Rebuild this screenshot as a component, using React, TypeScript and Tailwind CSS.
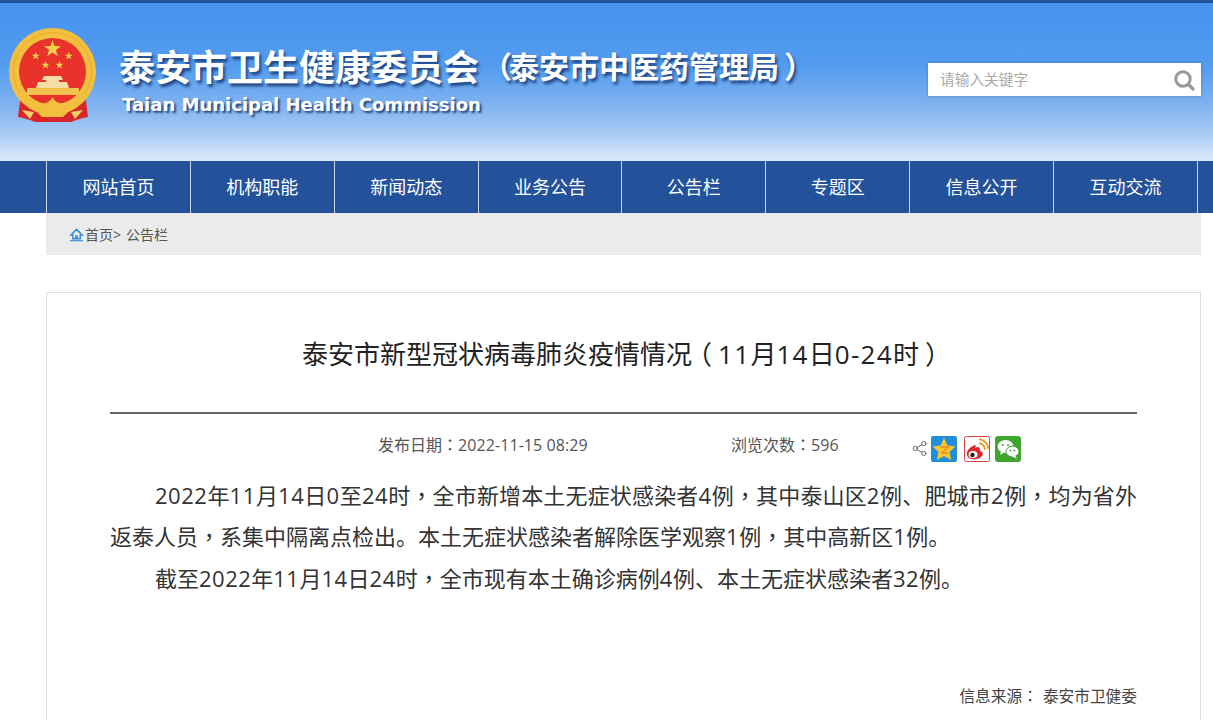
import { Share2 } from 'lucide-react';

const navItems = ['网站首页', '机构职能', '新闻动态', '业务公告', '公告栏', '专题区', '信息公开', '互动交流'];

// digits run a bit wider than Open Sans, and the comma / colon sit in the middle of their box
const Rich = ({ text, digits = 'tracking-[0.022em]' }: { text: string; digits?: string }) => (
  <>
    {text
      .split(/([0-9:-]+|[，：])/)
      .filter(Boolean)
      .map((part, i) => {
        if (part === '，' || part === '：') {
          return (
            <span key={i} className="font-['Noto_Sans_CJK_TC',sans-serif]">
              {part}
            </span>
          );
        }
        if (/^[0-9:-]+$/.test(part)) {
          return (
            <span key={i} className={digits}>
              {part}
            </span>
          );
        }
        return <span key={i}>{part}</span>;
      })}
  </>
);

const starPoints = (cx: number, cy: number, r: number) => {
  const pts: string[] = [];
  for (let i = 0; i < 10; i++) {
    const rad = i % 2 === 0 ? r : r * 0.4;
    const a = (Math.PI / 5) * i - Math.PI / 2;
    pts.push(`${(cx + rad * Math.cos(a)).toFixed(2)},${(cy + rad * Math.sin(a)).toFixed(2)}`);
  }
  return pts.join(' ');
};

const Emblem = () => (
  <svg width="90" height="97" viewBox="0 0 90 97">
    <path d="M14 62 C12 72 11 82 10 90 C17 91 22 93 27 95 L63 95 C68 93 73 91 80 90 C79 82 78 72 76 62 Z" fill="#d8262a" />
    <circle cx="44.5" cy="44.5" r="43.5" fill="#f3bf3f" />
    <circle cx="44.5" cy="44.5" r="39" fill="none" stroke="#e9a92c" strokeWidth="1" />
    <circle cx="44.5" cy="44.5" r="33.5" fill="#e9322a" />
    <polygon points={starPoints(44.5, 22, 9)} fill="#f8ce4b" />
    <polygon points={starPoints(27.7, 29, 4.2)} fill="#f8ce4b" />
    <polygon points={starPoints(60.7, 29, 4.2)} fill="#f8ce4b" />
    <polygon points={starPoints(37.5, 38, 4.2)} fill="#f8ce4b" />
    <polygon points={starPoints(51.5, 38, 4.2)} fill="#f8ce4b" />
    <path d="M36 49 H53 L55 53 H51 V55 H59 L61 61 H28 L30 55 H38 V53 H34 Z" fill="#f6dca6" />
    <rect x="19" y="61" width="52" height="7" fill="#f2c14e" />
    <path d="M13 63 C21 73 32 77 38 76 C41 75 43 73 44.5 70 C46 73 48 75 51 76 C57 77 68 73 76 63 L77 69 C69 80 57 83 50 80 L39 80 C32 83 20 80 12 69 Z" fill="#f3bf3f" />
    <path d="M33 82 C37 80 41 78 44.5 74 C48 78 52 80 56 82 L61 84 L55 90 H34 L28 84 Z" fill="#f3bf3f" />
    <path d="M14 83 L26 85 L22 92 Z M75 83 L63 85 L67 92 Z" fill="#f6d06a" />
  </svg>
);

const QzoneIcon = () => (
  <svg width="26" height="26" viewBox="0 0 26 26">
    <rect width="26" height="26" rx="2" fill="#1f8fdc" />
    <polygon points="13,2 16.5,9.5 24.5,10.5 18.5,16 20.2,24 13,20 5.8,24 7.5,16 1.5,10.5 9.5,9.5" fill="#f8c630" />
    <path d="M9 11 H17 L11 17 H17" fill="none" stroke="#e8941a" strokeWidth="1.6" />
  </svg>
);

const WeiboIcon = () => (
  <svg width="26" height="26" viewBox="0 0 26 26">
    <rect x="0.5" y="0.5" width="25" height="25" rx="2" fill="#fff" stroke="#d6433f" />
    <path d="M11 9 C5 11 2 16 3 19 C4 23 9 24 13 23 C18 22 20 18 18 16 C17 15 16 15 16 14 C16 11 14 10 11 12 C12 10 12 8 11 9 Z" fill="#e0272c" />
    <ellipse cx="9" cy="18.5" rx="4.5" ry="3.6" fill="#fff" />
    <circle cx="8.5" cy="19" r="2.2" fill="#222" />
    <path d="M15 7 A7 7 0 0 1 21 14" fill="none" stroke="#f39a2b" strokeWidth="2" />
    <path d="M15 3 A11 11 0 0 1 24.5 13" fill="none" stroke="#f39a2b" strokeWidth="2" />
  </svg>
);

const WechatIcon = () => (
  <svg width="26" height="26" viewBox="0 0 26 26">
    <rect width="26" height="26" rx="3" fill="#3fa52e" />
    <ellipse cx="10.5" cy="10.5" rx="8" ry="6.5" fill="#fff" />
    <path d="M6 15 L5 19 L10 16 Z" fill="#fff" />
    <ellipse cx="17.5" cy="15.5" rx="6.5" ry="5.4" fill="#fff" stroke="#3fa52e" />
    <path d="M20 19.5 L22 22.5 L17 20.5 Z" fill="#fff" />
    <circle cx="8" cy="9" r="1" fill="#3fa52e" />
    <circle cx="13" cy="9" r="1" fill="#3fa52e" />
    <circle cx="15.5" cy="14.5" r="0.9" fill="#3fa52e" />
    <circle cx="19.5" cy="14.5" r="0.9" fill="#3fa52e" />
  </svg>
);

const App = () => {
  return (
    <div className="h-screen overflow-hidden bg-white font-['Open_Sans','Noto_Sans_CJK_SC',sans-serif] text-[#333]">
      <header className="flex h-[161px] items-start border-t-[3px] border-[#23529b] bg-[linear-gradient(180deg,#4692ef_0%,#539cef_40%,#86b6f0_68%,#b0cff5_85%,#dcebfc_100%)]">
        <div className="ml-2 mt-6 shrink-0">
          <Emblem />
        </div>
        <div className="ml-[21px] mt-[38px] w-[729px] shrink-0">
          <div className="flex h-[48px] items-center font-['Noto_Sans_CJK_SC',sans-serif] font-bold text-white [text-shadow:2px_3px_3px_rgba(20,50,110,0.85)]">
            <span className="text-[36px] leading-none">泰安市卫生健康委员会</span>
            <span className="ml-[3px] mr-[-3px] text-[30px] leading-none">（</span>
            <span className="whitespace-nowrap text-[30px] leading-none">泰安市中医药管理局</span>
            <span className="ml-[5px] text-[30px] leading-none">）</span>
          </div>
          <p className="ml-[3px] mt-[3px] whitespace-nowrap font-['DejaVu_Sans',sans-serif] text-[18px] leading-[26px] font-bold text-white [text-shadow:2px_2px_2px_rgba(20,50,110,0.85)]">
            Taian Municipal Health Commission
          </p>
        </div>
        <div className="ml-[80px] mt-[60px] flex h-[33px] w-[273px] shrink-0 items-center justify-between bg-white pl-3 pr-[6px] shadow-[0_0_3px_rgba(60,80,120,0.5)]">
          <span className="font-['Noto_Sans_CJK_SC',sans-serif] text-[14.7px] text-[#aaa]">请输入关键字</span>
          <svg width="22" height="22" viewBox="0 0 22 22">
            <circle cx="10" cy="10" r="7.2" fill="none" stroke="#999" strokeWidth="3" />
            <path d="M15.5 15.5 L20 20" stroke="#999" strokeWidth="3.2" strokeLinecap="round" />
          </svg>
        </div>
      </header>

      <nav className="h-[52px] bg-[#23529b]">
        <ul className="ml-[46px] flex h-full w-[1151.9px] border-r border-[#c9d6ea]">
          {navItems.map((item) => (
            <li key={item} className="flex h-full flex-1 items-center justify-center border-l border-[#c9d6ea] text-lg text-white">
              {item}
            </li>
          ))}
        </ul>
      </nav>

      <div className="mr-[12px] ml-[46px] flex h-[42px] items-center bg-[#ebebeb] pl-[23px] pt-[2px] text-sm text-[#555]">
        <svg width="15" height="14" viewBox="0 0 16 14" className="shrink-0">
          <path d="M8 1 L14 7 H12 V11 H4 V7 H2 Z" fill="none" stroke="#3a8bd8" strokeWidth="1.6" />
          <rect x="6.5" y="7.5" width="3" height="3.5" fill="#3a8bd8" />
          <rect x="1" y="12.5" width="14" height="1.2" fill="#3a8bd8" />
        </svg>
        <span className="ml-px">首页&gt;</span>
        <span className="ml-[5px]">公告栏</span>
      </div>

      <main className="mr-[12px] ml-[46px] mt-[37px] border border-[#ddd] px-[63px] pb-10">
        <h1 className="flex h-[121px] items-center justify-center whitespace-nowrap border-b-2 border-[#666] pt-[3px] text-[26px] font-normal text-[#222]">
          <span>泰安市新型冠状病毒肺炎疫情情况</span>
          <span className="ml-[-6px] mr-[6px]">（</span>
          <span>
            <Rich text="11月14日0-24时" digits="tracking-[0.05em]" />
          </span>
          <span className="ml-[6px] mr-[-6px]">）</span>
        </h1>
        <div className="flex h-[60px] items-center pt-[1px] text-base text-[#555]">
          <span className="ml-[268px] w-[353px]">
            <Rich text="发布日期：2022-11-15 08:29" digits="tracking-[0.005em]" />
          </span>
          <span className="w-[180px]">
            <Rich text="浏览次数：596" digits="tracking-[0.005em]" />
          </span>
          <Share2 size={17} strokeWidth={1.4} className="mt-[8px] text-[#666]" />
          <div className="ml-[3px] mt-[8px] flex items-center">
            <QzoneIcon />
            <div className="ml-[7px]">
              <WeiboIcon />
            </div>
            <div className="ml-[5px]">
              <WechatIcon />
            </div>
          </div>
        </div>
        <div className="text-justify text-[22px] leading-[40.25px] text-[#333]">
          <p className="indent-[45px]">
            <Rich text="2022年11月14日0至24时，全市新增本土无症状感染者4例，其中泰山区2例、肥城市2例，均为省外" />
            <Rich text="返泰人员，系集中隔离点检出。本土无症状感染者解除医学观察1例，其中高新区1例。" />
          </p>
          <p className="indent-[45px]">
            <Rich text="截至2022年11月14日24时，全市现有本土确诊病例4例、本土无症状感染者32例。" />
          </p>
        </div>
        <p className="mt-[86px] text-right text-[15.7px] text-[#444]">
          <Rich text="信息来源：" />
          <span className="ml-[5px]">泰安市卫健委</span>
        </p>
      </main>
    </div>
  );
};

export default App;
